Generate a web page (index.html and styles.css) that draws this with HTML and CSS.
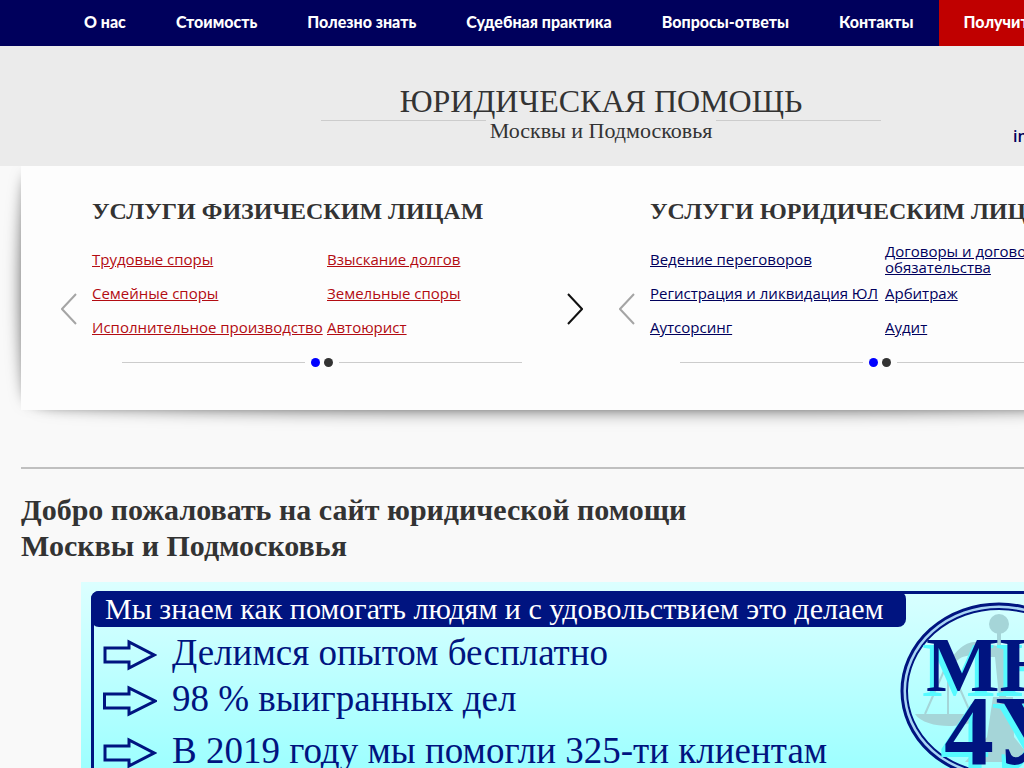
FILE: index.html
```html
<!DOCTYPE html>
<html lang="ru">
<head>
<meta charset="utf-8">
<title>Юридическая помощь Москвы и Подмосковья</title>
<link rel="stylesheet" href="styles.css">
</head>
<body>
<div class="page">
  <nav class="menu">
    <a class="menu-item" href="#about">О нас</a>
    <a class="menu-item" href="#price">Стоимость</a>
    <a class="menu-item" href="#info">Полезно знать</a>
    <a class="menu-item" href="#practice">Судебная практика</a>
    <a class="menu-item" href="#faq">Вопросы-ответы</a>
    <a class="menu-item" href="#contacts">Контакты</a>
    <a class="menu-item menu-accent" href="#consult">Получить консультацию</a>
  </nav>

  <header class="header">
    <div class="brand">
      <div class="brand-name">ЮРИДИЧЕСКАЯ ПОМОЩЬ</div>
      <div class="brand-row">
        <span class="brand-line"></span>
        <span class="brand-region">Москвы и Подмосковья</span>
        <span class="brand-line"></span>
      </div>
    </div>
    <a class="mail" href="#mail">info</a>
  </header>

  <main class="content">
    <section class="services">
      <div class="slider">
        <button class="arrow arrow-off" type="button" aria-label="Назад"><svg width="16" height="32" viewBox="0 0 16 32"><path d="M15 1 1 16 15 31"/></svg></button>
        <div class="slide">
          <h2 class="slide-title">УСЛУГИ ФИЗИЧЕСКИМ ЛИЦАМ</h2>
          <div class="links links-red">
            <a href="#s1">Трудовые споры</a><a href="#s2">Взыскание долгов</a>
            <a href="#s3">Семейные споры</a><a href="#s4">Земельные споры</a>
            <a href="#s5">Исполнительное производство</a><a href="#s6">Автоюрист</a>
          </div>
          <div class="pager">
            <span class="pager-line"></span>
            <button class="dot dot-active" type="button" aria-label="Слайд 1"></button>
            <button class="dot" type="button" aria-label="Слайд 2"></button>
            <span class="pager-line"></span>
          </div>
        </div>
        <button class="arrow" type="button" aria-label="Вперёд"><svg width="16" height="32" viewBox="0 0 16 32"><path d="M1 1 15 16 1 31"/></svg></button>
      </div>
      <div class="slider">
        <button class="arrow arrow-off" type="button" aria-label="Назад"><svg width="16" height="32" viewBox="0 0 16 32"><path d="M15 1 1 16 15 31"/></svg></button>
        <div class="slide">
          <h2 class="slide-title">УСЛУГИ ЮРИДИЧЕСКИМ ЛИЦАМ</h2>
          <div class="links links-navy">
            <a href="#u1">Ведение переговоров</a><a href="#u2">Договоры и договорные обязательства</a>
            <a href="#u3">Регистрация и ликвидация ЮЛ</a><a href="#u4">Арбитраж</a>
            <a href="#u5">Аутсорсинг</a><a href="#u6">Аудит</a>
          </div>
          <div class="pager">
            <span class="pager-line"></span>
            <button class="dot dot-active" type="button" aria-label="Слайд 1"></button>
            <button class="dot" type="button" aria-label="Слайд 2"></button>
            <span class="pager-line"></span>
          </div>
        </div>
        <button class="arrow" type="button" aria-label="Вперёд"><svg width="16" height="32" viewBox="0 0 16 32"><path d="M1 1 15 16 1 31"/></svg></button>
      </div>
    </section>

    <section class="welcome">
      <h1 class="welcome-title">Добро пожаловать на сайт юридической помощи<br>Москвы и Подмосковья</h1>
      <div class="banner">
        <div class="banner-frame">
          <div class="banner-title">Мы знаем как помогать людям и с удовольствием это делаем</div>
          <ul class="facts">
            <li class="fact"><svg class="fact-arrow" width="54" height="32" viewBox="0 0 54 32"><path d="M2 9H26V3L51 16 26 29V23H2Z"/></svg>Делимся опытом бесплатно</li>
            <li class="fact"><svg class="fact-arrow" width="54" height="32" viewBox="0 0 54 32"><path d="M1.500 9H26V3L52 16 26 29V23H1.500Z"/></svg>98 % выигранных дел</li>
            <li class="fact"><svg class="fact-arrow" width="54" height="32" viewBox="0 0 54 32"><path d="M2 9H26V3L51 16 26 29V23H2Z"/></svg>В 2019 году мы помогли 325-ти клиентам</li>
          </ul>
          <svg class="emblem" width="200" height="180" viewBox="0 0 200 180" role="img" aria-label="МЮ 4У">
            <ellipse class="ring-fill" cx="100" cy="89" rx="95" ry="85"/>
            <ellipse class="ring" cx="100" cy="89" rx="97" ry="87"/>
            <ellipse class="ring ring-thin" cx="100" cy="89" rx="92" ry="82"/>
            <g class="scales">
              <circle cx="100" cy="22" r="10"/>
              <path d="M98 30h4v15h10v10l-5 40h7l1 40 20 25H66l22-25 6-40h6l-4-40H85C72 54 64 50 54 63l-7 2c8-14 18-27 34-25l17 4Z"/>
              <path d="M16 112h68c-7 15-57 17-68 0Z"/>
              <path class="chain" d="M48 62 26 112M49 62V112M50 62 72 112"/>
            </g>
            <g class="letters">
              <text x="27" y="89" font-size="78">МЮ</text>
              <text x="45" y="162" font-size="100">4У</text>
            </g>
          </svg>
        </div>
      </div>
    </section>
  </main>
</div>
</body>
</html>
```

FILE: styles.css
```css
* { box-sizing: border-box; }
body {
  margin: 0;
  overflow-x: hidden;
  background: #f9f9f9;
  color: #333;
  font-family: "Open Sans", "Noto Sans", sans-serif;
  font-size: 15px;
}
.page {
  position: relative;
  z-index: 0;
  min-width: 1202px;
  height: 100vh;
  overflow: hidden;
}

.menu {
  position: relative;
  display: flex;
  padding-left: 59px;
  background: #00005c;
}
.menu-item {
  padding: 12px 25px 14px;
  color: #fff;
  font-family: "Lato", "Noto Sans", sans-serif;
  font-size: 16px;
  font-weight: 900;
  line-height: 20px;
  text-decoration: none;
  white-space: nowrap;
}
.menu-accent { flex: 1; background: #c00000; }

.header {
  position: relative;
  display: grid;
  grid-template-columns: 1fr 560px 1fr;
  height: 120px;
  padding-top: 37px;
  background: #ebebeb;
}
.brand {
  grid-column: 2;
  font-family: "Liberation Serif", serif;
  text-align: center;
}
.brand-name { padding-bottom: 1px; font-size: 32px; line-height: 36px; }
.brand-row { display: flex; gap: 4px; line-height: 22px; font-size: 22px; }
.brand-line { flex: 1; height: 1px; background: #ccc; }
.mail {
  justify-self: start;
  padding: 43px 0 0 132px;
  color: #00005c;
  font-size: 16px;
  font-weight: 600;
  line-height: 20px;
  text-decoration: none;
}

.content { width: 1160px; margin: 0 auto; }
.services {
  position: relative;
  display: grid;
  grid-template-columns: 1fr 1fr;
  padding: 30px 22px 43px;
  background: #fdfdfd;
}
.services::before,
.services::after {
  content: "";
  position: absolute;
  z-index: -1;
}
.services::before {
  inset: 10px 0;
  border-radius: 10px / 120px;
  box-shadow: 0 0 16px rgba(0, 0, 0, 0.6);
}
.services::after {
  inset: 40px 20px 0;
  border-radius: 400px / 10px;
  box-shadow: 0 0 18px rgba(0, 0, 0, 0.6);
}
.slider {
  display: grid;
  grid-template-columns: 16px 1fr 16px;
  column-gap: 15px;
  padding: 0 18px;
}
.arrow {
  align-self: start;
  margin-top: 97px;
  padding: 0;
  border: 0;
  background: none;
}
.arrow svg { display: block; fill: none; stroke: #111; stroke-width: 2; }
.arrow-off svg { stroke: #a5a5a5; }
.slide-title {
  margin: 0;
  font-family: "Liberation Serif", serif;
  font-size: 24px;
  line-height: 30px;
  white-space: nowrap;
}
.links {
  display: grid;
  grid-template-columns: 235px 1fr;
  grid-auto-rows: 34px;
  align-items: center;
  justify-items: start;
  margin-top: 16px;
  line-height: 16px;
}
.links-red a { color: #b30c12; }
.links-navy a { color: #00005c; }
.pager {
  display: flex;
  align-items: center;
  gap: 4px;
  width: 400px;
  margin: 14px auto 0;
}
.pager-line { flex: 1; height: 1px; background: #ccc; }
.pager-line:first-child { margin-right: 2px; }
.pager-line:last-child { margin-left: 2px; }
.dot {
  width: 9px;
  height: 9px;
  padding: 0;
  border: 0;
  border-radius: 50%;
  background: #333;
}
.dot-active { background: #00f; }

.welcome { margin-top: 57px; border-top: 2px solid #c0c0c0; }
.welcome-title {
  margin: 23px 0 18px;
  font-family: "Liberation Serif", serif;
  font-size: 30px;
  line-height: 36px;
}
.banner {
  margin: 0 60px;
  padding: 9px 10px;
  background: linear-gradient(#dcffff, #9ff 200px);
  color: #001480;
  font-family: "Liberation Serif", serif;
}
.banner-frame {
  position: relative;
  height: 360px;
  border: 3px solid #001480;
  border-radius: 8px;
}
.banner-title {
  width: 815px;
  margin: -3px;
  padding: 0 14px;
  border-radius: 8px;
  background: #001480;
  color: #fff;
  font-size: 30px;
  line-height: 36px;
  white-space: nowrap;
}
.facts { margin: 0; padding: 9px 0 0 9px; list-style: none; }
.fact {
  display: flex;
  align-items: center;
  gap: 15px;
  margin-bottom: 6px;
  font-size: 37px;
  line-height: 40px;
}
.fact:nth-child(2) { margin-bottom: 12px; }
.fact-arrow { margin-top: 4px; fill: none; stroke: #001480; stroke-width: 3; }
.emblem {
  position: absolute;
  top: 8px;
  left: 805px;
  fill: #001480;
  font-family: "Liberation Serif", serif;
  font-weight: 700;
}
.ring { fill: none; stroke: #001480; stroke-width: 3; }
.ring-thin { stroke-width: 2; }
.ring-fill { fill: none; stroke: #a9d5f5; stroke-width: 4; }
.scales { fill: #a5d5d8; }
.chain { fill: none; stroke: #a5d5d8; stroke-width: 2; }
.letters { filter: drop-shadow(-4px 5px 0 #55faff); }
```
